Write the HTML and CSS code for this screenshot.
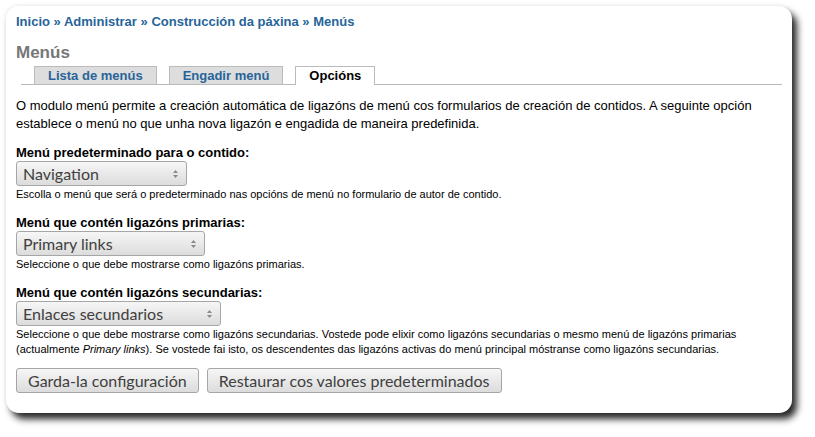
FILE: index.html
```html
<!DOCTYPE html>
<html>
<head>
<meta charset="utf-8">
<link rel="stylesheet" href="styles.css">
</head>
<body>
<div class="page">
  <div class="card">
    <div class="breadcrumb"><a href="#">Inicio</a> » <a href="#">Administrar</a> » <a href="#">Construcción da páxina</a> » <a href="#">Menús</a></div>
    <h1 class="title">Menús</h1>
    <ul class="tabs">
      <li class="tab"><a href="#">Lista de menús</a></li>
      <li class="tab"><a href="#">Engadir menú</a></li>
      <li class="tab active"><a href="#">Opcións</a></li>
    </ul>
    <p class="intro">O modulo menú permite a creación automática de ligazóns de menú cos formularios de creación de contidos. A seguinte opción establece o menú no que unha nova ligazón e engadida de maneira predefinida.</p>
    <div class="field">
      <label class="label">Menú predeterminado para o contido:</label>
      <div class="select w1"><span>Navigation</span><svg class="arrows" width="7" height="10" viewBox="0 0 7 10"><path d="M1 4 L3.5 1 L6 4 Z M1 6 L3.5 9 L6 6 Z" fill="#8a8a8a"/></svg></div>
      <div class="desc">Escolla o menú que será o predeterminado nas opcións de menú no formulario de autor de contido.</div>
    </div>
    <div class="field">
      <label class="label">Menú que contén ligazóns primarias:</label>
      <div class="select w2"><span>Primary links</span><svg class="arrows" width="7" height="10" viewBox="0 0 7 10"><path d="M1 4 L3.5 1 L6 4 Z M1 6 L3.5 9 L6 6 Z" fill="#8a8a8a"/></svg></div>
      <div class="desc">Seleccione o que debe mostrarse como ligazóns primarias.</div>
    </div>
    <div class="field">
      <label class="label">Menú que contén ligazóns secundarias:</label>
      <div class="select w3"><span>Enlaces secundarios</span><svg class="arrows" width="7" height="10" viewBox="0 0 7 10"><path d="M1 4 L3.5 1 L6 4 Z M1 6 L3.5 9 L6 6 Z" fill="#8a8a8a"/></svg></div>
      <div class="desc">Seleccione o que debe mostrarse como ligazóns secundarias. Vostede pode elixir como ligazóns secundarias o mesmo menú de ligazóns primarias (actualmente <em>Primary links</em>). Se vostede fai isto, os descendentes das ligazóns activas do menú principal móstranse como ligazóns secundarias.</div>
    </div>
    <div class="buttons">
      <button class="btn">Garda-la configuración</button>
      <button class="btn">Restaurar cos valores predeterminados</button>
    </div>
  </div>
</div>
</body>
</html>
```
FILE: styles.css
```css
html, body { margin: 0; padding: 0; background: #fff; }
body { font-family: "Liberation Sans", Arial, sans-serif; color: #000; }
.page { padding: 6px 0 0 6px; width: 815px; height: 437px; box-sizing: border-box; }
.card {
  width: 786px; height: 407px; box-sizing: border-box;
  background: #fff; border-radius: 13px;
  box-shadow: 5px 6px 7px rgba(0,0,0,0.85), -1px -1px 4px rgba(0,0,0,0.06);
  padding: 8px 10px 0 10px;
}
a { text-decoration: none; color: #27649a; }
.breadcrumb { font-size: 13px; font-weight: bold; color: #27649a; line-height: 15px; }
.title { margin: 14px 0 0 0; font-size: 17px; color: #777; font-weight: bold; line-height: 20px; }
.tabs {
  list-style: none; margin: 3px 0 0 5px; padding: 0 0 0 13px;
  display: flex; gap: 12px; border-bottom: 1px solid #bbb; height: 18px;
}
.tab a {
  display: block; box-sizing: border-box; height: 18px;
  background: #ddd; border: 1px solid #bbb; border-bottom: none;
  font-size: 13px; font-weight: bold; line-height: 17px; padding: 0 13px;
}
.tab.active a { background: #fff; color: #000; height: 19px; padding: 0 13px; }
.intro { margin: 12px 0 0 0; font-size: 13px; line-height: 18px; }
.field { margin-top: 12px; }
.field + .field { margin-top: 13px; }
.label { display: block; font-size: 13px; font-weight: bold; line-height: 16px; }
.select {
  margin-top: 0; box-sizing: border-box; height: 25px;
  border: 1px solid #a6a6a6; border-radius: 3px;
  background: linear-gradient(#f6f6f6, #dcdcdc);
  display: flex; align-items: center; justify-content: space-between;
  padding: 0 7px 0 6px;
  font-family: Lato, "Open Sans", sans-serif; font-size: 16px; color: #404040;
}
.arrows { display: block; }
.w1 { width: 171px; }
.w2 { width: 189px; }
.w3 { width: 205px; }
.desc { margin-top: 1px; font-size: 11px; line-height: 15px; }
.buttons { margin-top: 11px; display: flex; gap: 8px; }
.btn {
  height: 25px; box-sizing: border-box; padding: 0 11px;
  border: 1px solid #a6a6a6; border-radius: 3px;
  background: linear-gradient(#f6f6f6, #dcdcdc);
  font-family: Lato, "Open Sans", sans-serif; font-size: 16px; color: #404040;
}
```
